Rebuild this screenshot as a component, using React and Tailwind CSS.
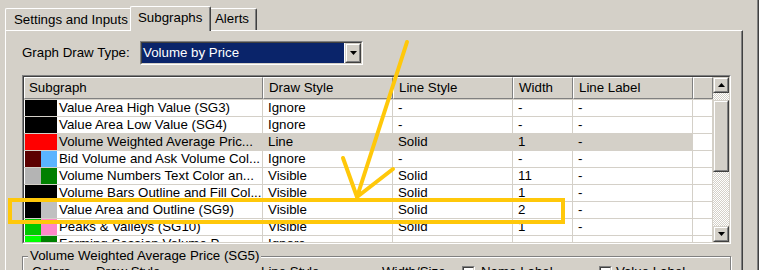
import React from 'react';

function Raised({ className = '', children }) {
  return (
    <div className={`border border-t-[#d4d0c8] border-l-[#d4d0c8] border-b-[#404040] border-r-[#404040] ${className}`}>
      <div className="w-full h-full border border-t-white border-l-white border-b-[#808080] border-r-[#808080] bg-[#d4d0c8] flex items-center justify-center">
        {children}
      </div>
    </div>
  );
}

function Down() {
  return (
    <svg width="7" height="4" viewBox="0 0 7 4">
      <polygon points="0,0 7,0 3.5,4" fill="#000" />
    </svg>
  );
}

function Up() {
  return (
    <svg width="7" height="4" viewBox="0 0 7 4">
      <polygon points="0,4 7,4 3.5,0" fill="#000" />
    </svg>
  );
}

const colW = ['w-[239px]', 'w-[130px]', 'w-[120px]', 'w-[60px]', 'w-[120px]', 'w-[20px]'];
const headers = ['Subgraph', 'Draw Style', 'Line Style', 'Width', 'Line Label', ''];

const rows = [
  { c: ['#000000', '#000000'], name: 'Value Area High Value (SG3)', d: 'Ignore', l: '-', w: '-', lb: '-' },
  { c: ['#000000', '#000000'], name: 'Value Area Low Value (SG4)', d: 'Ignore', l: '-', w: '-', lb: '-' },
  { c: ['#ff0000', '#ff0000'], name: 'Volume Weighted Average Pric...', d: 'Line', l: 'Solid', w: '1', lb: '-', sel: true },
  { c: ['#5c0000', '#5ab4ff'], name: 'Bid Volume and Ask Volume Col...', d: 'Ignore', l: '-', w: '-', lb: '-' },
  { c: ['#b4b4b4', '#008000'], name: 'Volume Numbers Text Color an...', d: 'Visible', l: 'Solid', w: '11', lb: '-' },
  { c: ['#000000', '#000000'], name: 'Volume Bars Outline and Fill Col...', d: 'Visible', l: 'Solid', w: '1', lb: '-' },
  { c: ['#000000', '#c0c0c0'], name: 'Value Area and Outline (SG9)', d: 'Visible', l: 'Solid', w: '2', lb: '-' },
  { c: ['#00c800', '#ff88c8'], name: 'Peaks & Valleys (SG10)', d: 'Visible', l: 'Solid', w: '1', lb: '-' },
  { c: ['#00ff00', '#008000'], name: 'Forming Session Volume P...', d: 'Ignore', l: '-', w: '-', lb: '-' },
];

function Checkbox() {
  return (
    <div className="w-[13px] h-[13px] border border-t-[#808080] border-l-[#808080] border-b-white border-r-white">
      <div className="w-full h-full border border-t-[#404040] border-l-[#404040] border-b-[#d4d0c8] border-r-[#d4d0c8] bg-white" />
    </div>
  );
}

export default function App() {
  return (
    <div className="relative w-[772px] h-[270px] overflow-hidden flex bg-white text-black text-[13.3px] leading-[16px] font-['Liberation_Sans',Arial,sans-serif]">
      <div className="w-[757px] h-full bg-[#d4d0c8] flex flex-col overflow-hidden">
        {/* Tabs */}
        <div className="h-[30px] flex items-end pl-[5px] shrink-0">
          <div className="h-[22px] w-[125px] border-l border-t border-white rounded-tl-[2px] pl-[8px] pt-[3px] whitespace-nowrap">
            Settings and Inputs
          </div>
          <div className="relative z-10 h-[25px] -mb-px w-[81px] border-l border-t border-white border-r border-r-[#404040] shadow-[inset_-1px_0_0_#808080] bg-[#d4d0c8] rounded-t-[2px] pl-[7px] pt-[3px] whitespace-nowrap">
            Subgraphs
          </div>
          <div className="h-[22px] w-[46px] border-t border-white border-r border-r-[#404040] shadow-[inset_-1px_0_0_#808080] rounded-tr-[2px] pl-[4px] pt-[2px] whitespace-nowrap">
            Alerts
          </div>
        </div>

        {/* Panel */}
        <div className="ml-[5px] w-[738px] flex-1 border-l border-t border-white border-r border-r-[#404040] shadow-[inset_-1px_0_0_#808080] pl-[16px] pt-[10px] flex flex-col">
          <div className="flex items-center h-[24px] shrink-0">
            <div className="w-[118px] whitespace-nowrap">Graph Draw Type:</div>
            <div className="w-[223px] h-[24px] border border-t-[#808080] border-l-[#808080] border-b-white border-r-white">
              <div className="h-full border border-t-[#404040] border-l-[#404040] border-b-[#d4d0c8] border-r-[#d4d0c8] bg-white flex">
                <div className="flex-1 mr-px bg-[#0a246a] text-white pl-[1px] leading-[20px] whitespace-nowrap">Volume by Price</div>
                <Raised className="w-[16px] h-full">
                  <Down />
                </Raised>
              </div>
            </div>
          </div>

          {/* Table */}
          <div className="mt-[10px] w-[709px] h-[169px] shrink-0 border border-t-[#808080] border-l-[#808080] border-b-white border-r-white">
            <div className="h-full border border-t-[#404040] border-l-[#404040] border-b-[#d4d0c8] border-r-[#d4d0c8] bg-white flex overflow-hidden">
              <div className="w-[689px] flex flex-col overflow-hidden">
                <div className="h-[22px] flex shrink-0">
                  {headers.map((h, i) => (
                    <div
                      key={i}
                      className={`${colW[i]} h-full shrink-0 border border-t-white border-l-white border-b-[#808080] border-r-[#808080] bg-[#d4d0c8] ${i === 0 ? 'pl-[4px]' : 'pl-[5px]'} leading-[19px] whitespace-nowrap`}
                    >
                      {h}
                    </div>
                  ))}
                </div>
                {rows.map((r, ri) => {
                  const bg = r.sel ? 'bg-[#d4d0c8]' : 'bg-white';
                  return (
                    <div key={ri} className="h-[17px] flex shrink-0 border-t border-[#d4d0c8]">
                      <div className={`${colW[0]} h-full shrink-0 flex items-center border-r border-[#d4d0c8] ${bg} overflow-hidden whitespace-nowrap`}>
                        <div className="ml-[1px] w-[16px] h-full shrink-0" style={{ backgroundColor: r.c[0] }} />
                        <div className="w-[16px] h-full shrink-0" style={{ backgroundColor: r.c[1] }} />
                        <div className="ml-[2px]">{r.name}</div>
                      </div>
                      <div className={`${colW[1]} h-full shrink-0 border-r border-[#d4d0c8] ${bg} pl-[5px] whitespace-nowrap`}>{r.d}</div>
                      <div className={`${colW[2]} h-full shrink-0 border-r border-[#d4d0c8] ${bg} pl-[5px] whitespace-nowrap`}>{r.l}</div>
                      <div className={`${colW[3]} h-full shrink-0 border-r border-[#d4d0c8] ${bg} pl-[5px] whitespace-nowrap`}>{r.w}</div>
                      <div className={`${colW[4]} h-full shrink-0 border-r border-[#d4d0c8] ${bg} pl-[5px] whitespace-nowrap`}>{r.lb}</div>
                      <div className={`${colW[5]} h-full shrink-0 border-r border-[#d4d0c8] bg-white`} />
                    </div>
                  );
                })}
              </div>
              {/* Scrollbar */}
              <div className="w-[16px] h-full flex flex-col shrink-0">
                <Raised className="w-[16px] h-[16px] shrink-0">
                  <Up />
                </Raised>
                <div className="h-[7px] shrink-0 bg-[image:repeating-conic-gradient(#ffffff_0_25%,#d4d0c8_0_50%)] bg-[length:2px_2px]" />
                <Raised className="w-[16px] h-[72px] shrink-0" />
                <div className="flex-1 bg-[image:repeating-conic-gradient(#ffffff_0_25%,#d4d0c8_0_50%)] bg-[length:2px_2px]" />
                <Raised className="w-[16px] h-[16px] shrink-0">
                  <Down />
                </Raised>
              </div>
            </div>
          </div>

          {/* Group box */}
          <fieldset className="mt-[4px] w-[709px] h-[40px] shrink-0 border border-[#808080] shadow-[inset_1px_1px_0_#ffffff,1px_1px_0_#ffffff] p-0">
            <legend className="ml-[5px] px-[2px] bg-[#d4d0c8] leading-[16px] whitespace-nowrap">Volume Weighted Average Price (SG5)</legend>
            <div className="flex items-center pl-[9px] whitespace-nowrap">
              <div className="w-[64px]">Colors</div>
              <div className="w-[165px]">Draw Style</div>
              <div className="w-[121px]">Line Style</div>
              <div className="w-[80px]">Width/Size</div>
              <div className="w-[137px] flex items-center gap-[6px]">
                <Checkbox />
                <span>Name Label</span>
              </div>
              <div className="flex items-center gap-[4px]">
                <Checkbox />
                <span>Value Label</span>
              </div>
            </div>
          </fieldset>
        </div>
      </div>
      <div className="w-px h-full bg-[#808080]" />
      <div className="w-px h-full bg-[#404040]" />
      <div className="flex-1 h-full bg-white" />

      {/* Annotation overlay */}
      <svg className="absolute left-0 top-0 pointer-events-none" width="772" height="270" viewBox="0 0 772 270">
        <rect x="10" y="200" width="553" height="22" fill="none" stroke="#ffc80a" strokeWidth="4" />
        <path
          d="M407 42 L357 197 M343 158 L357 197 L393 169"
          fill="none"
          stroke="#ffc80a"
          strokeWidth="4"
          strokeLinecap="round"
          strokeLinejoin="round"
        />
      </svg>
    </div>
  );
}
